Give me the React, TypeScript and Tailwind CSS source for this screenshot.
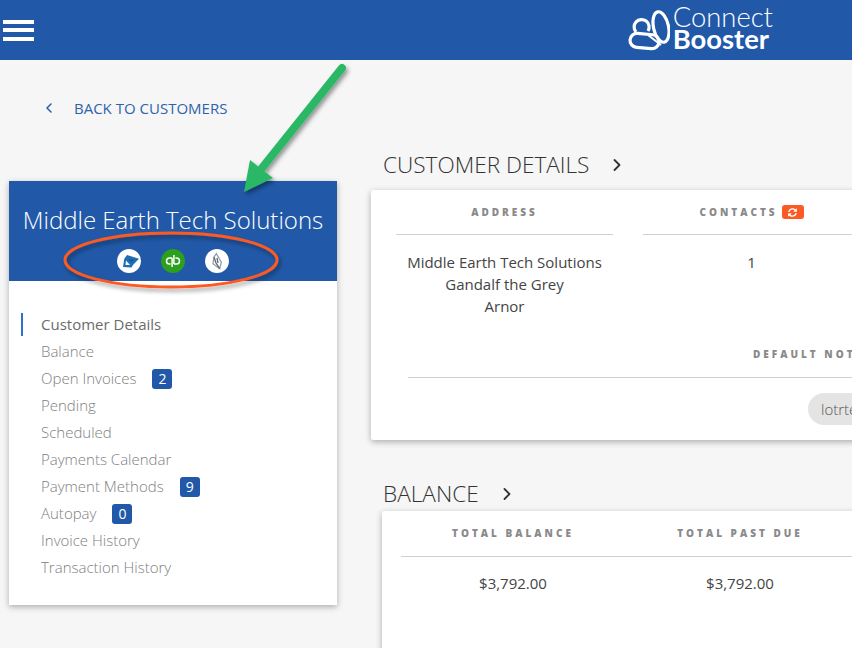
import { ChevronLeft, ChevronRight } from 'lucide-react';
import { FaSyncAlt } from 'react-icons/fa';

const navItems: { label: string; count?: number }[] = [
  { label: 'Balance' },
  { label: 'Open Invoices', count: 2 },
  { label: 'Pending' },
  { label: 'Scheduled' },
  { label: 'Payments Calendar' },
  { label: 'Payment Methods', count: 9 },
  { label: 'Autopay', count: 0 },
  { label: 'Invoice History' },
  { label: 'Transaction History' },
];

function Logo() {
  return (
    <div className="flex items-center gap-[3px]">
      <svg width="42" height="42" viewBox="0 0 42 42" fill="none" stroke="white" strokeWidth="3.2">
        <ellipse cx="33" cy="18" rx="7.5" ry="15.5" transform="rotate(-12 33 18)" />
        <path d="M20 22a7.5 7.5 0 1 0-12 1" />
        <rect x="2" y="25" width="29" height="14" rx="7" transform="rotate(5 16 32)" />
        <path d="M20 26 33 36" strokeWidth="2" />
      </svg>
      <div className="mb-[5px] flex flex-col font-['Lato',sans-serif] text-white">
        <span className="text-[27.4px] font-light leading-[21px]">Connect</span>
        <span className="text-[27.4px] font-bold leading-[23px]">Booster</span>
      </div>
    </div>
  );
}

function SmallTitle({ children }: { children: React.ReactNode }) {
  return <span className="text-[10px] font-extrabold leading-[14px] tracking-[3px] text-[#8a8a8a]">{children}</span>;
}

function SectionTitle({ title, mb }: { title: string; mb: string }) {
  return (
    <div className={`ml-[12px] flex h-[30px] items-center gap-[18px] text-[22.6px] font-light text-[#333] ${mb}`}>
      <span>{title}</span>
      <ChevronRight size={20} strokeWidth={2.2} className="text-[#333]" />
    </div>
  );
}

function IntegrationIcons() {
  return (
    <div className="mt-[13px] flex justify-center gap-[20px]">
      <div className="h-6 w-6 rounded-full bg-white">
        <svg width="24" height="24" viewBox="0 0 24 24" fill="#1f6fb5">
          <path d="M10 6 22 9.7 16 16 14.5 18.5 6 18 7.3 9.7z" />
          <path d="M9 11.5 13 16 8.5 16z" fill="white" />
          <path d="M11 10 18 10.5 14.5 13.5z" fill="#175a96" />
        </svg>
      </div>
      <div className="flex h-6 w-6 items-center justify-center rounded-full bg-[#2ca01c]">
        <svg width="16" height="12" viewBox="0 0 16 12" fill="none" stroke="white" strokeWidth="1.5">
          <path d="M7.1 2.9H4.6a3.1 3.1 0 0 0 0 6.2h1" />
          <path d="M7.1 2.9V12" />
          <path d="M8.9 9.1H11.4a3.1 3.1 0 0 0 0-6.2h-1" />
          <path d="M8.9 0V9.1" />
        </svg>
      </div>
      <div className="h-6 w-6 rounded-full bg-white">
        <svg width="24" height="24" viewBox="0 0 24 24" fill="none" strokeWidth="1.3">
          <path d="M11.3 4.7 16.3 13 14.7 19.7 8 14.7 9 8z" stroke="#8aa0b5" />
          <path d="M9 8 11 14 14.7 19.7M12 9 13 14" stroke="#666" />
        </svg>
      </div>
    </div>
  );
}

function Sidebar() {
  return (
    <div className="mt-[63px] w-[328px] bg-white shadow-[0_2px_6px_rgba(0,0,0,0.3)]">
      <div className="h-[100px] bg-[#2159a8] pt-[22px] text-center">
        <h1 className="text-[24px] font-light leading-[33px] text-white">Middle Earth Tech Solutions</h1>
        <IntegrationIcons />
      </div>
      <ul className="pb-6 pt-[30px] text-[15px] font-light leading-[27px] text-[#808080]">
        <li className="relative pl-8 font-normal text-[#6b6b6b]">
          <span className="absolute left-3 top-[2px] h-[23px] w-[2px] bg-[#2f6fd0]" />
          Customer Details
        </li>
        {navItems.map((item) => (
          <li key={item.label} className="flex h-[27px] items-center gap-4 pl-8">
            <span>{item.label}</span>
            {item.count !== undefined && (
              <span className="flex h-5 min-w-5 items-center justify-center rounded-[3px] bg-[#2159a8] px-1 text-[14px] font-normal text-white">
                {item.count}
              </span>
            )}
          </li>
        ))}
      </ul>
    </div>
  );
}

function CustomerDetailsCard() {
  return (
    <div className="h-[250px] w-[640px] rounded-[2px] bg-white shadow-[0_2px_6px_rgba(0,0,0,0.3)]">
      <div className="ml-[25px] grid grid-cols-[217px_217px] gap-[30px] pt-[15px] text-center">
        <div>
          <div className="flex h-[30px] items-start justify-center border-b border-[#d0d0d0]">
            <SmallTitle>ADDRESS</SmallTitle>
          </div>
          <p className="mt-[16px] text-[15px] leading-[22px] text-[#444]">
            Middle Earth Tech Solutions
            <br />
            Gandalf the Grey
            <br />
            Arnor
          </p>
        </div>
        <div>
          <div className="flex h-[30px] items-start justify-center gap-[4px] border-b border-[#d0d0d0]">
            <SmallTitle>CONTACTS</SmallTitle>
            <span className="flex h-[14px] w-[22px] items-center justify-center rounded-[3px] bg-[#fb5a24] text-white">
              <FaSyncAlt size={9} />
            </span>
          </div>
          <p className="mt-[16px] text-[15px] leading-[22px] text-[#444]">1</p>
        </div>
      </div>
      <div className="ml-[37px] mt-[23px] border-b border-[#d0d0d0] pb-[13px] pl-[345px]">
        <SmallTitle>DEFAULT NOTIFICATION EMAIL</SmallTitle>
      </div>
      <div className="ml-[437px] mt-[15px] flex h-8 w-[200px] items-center rounded-l-full bg-[#e4e4e4] pl-[13px] text-[15px] font-light text-[#555]">
        lotrtech@example.com
      </div>
    </div>
  );
}

function BalanceCard() {
  return (
    <div className="ml-[11px] h-[200px] w-[640px] rounded-[2px] bg-white px-[19px] pt-[15px] text-center shadow-[0_2px_6px_rgba(0,0,0,0.3)]">
      <div className="grid grid-cols-[224px_230px] border-b border-[#d0d0d0] pb-4">
        <SmallTitle>TOTAL BALANCE</SmallTitle>
        <SmallTitle>TOTAL PAST DUE</SmallTitle>
      </div>
      <div className="mt-[15px] grid grid-cols-[224px_230px] text-[15px] leading-[22px] text-[#444]">
        <span>$3,792.00</span>
        <span>$3,792.00</span>
      </div>
    </div>
  );
}

export default function App() {
  return (
    <div className="relative h-[648px] w-[852px] overflow-hidden bg-[#f6f6f6] font-['Open_Sans',sans-serif]">
      <header className="flex h-[60px] items-center justify-between bg-[#2159a8] pl-[3px] pr-[79px]">
        <div className="flex w-[31px] flex-col gap-[4.5px]">
          <span className="h-1 bg-white" />
          <span className="h-1 bg-white" />
          <span className="h-1 bg-white" />
        </div>
        <Logo />
      </header>

      <div className="flex">
        <div className="w-[371px] shrink-0 pl-[9px]">
          <a className="mt-[38px] flex h-5 items-center gap-[17px] pl-[32px] text-[15px] text-[#2f62ac]">
            <ChevronLeft size={16} strokeWidth={2.4} />
            <span>BACK TO CUSTOMERS</span>
          </a>
          <Sidebar />
        </div>

        <main className="pt-[90px]">
          <SectionTitle title="CUSTOMER DETAILS" mb="mb-[10px]" />
          <CustomerDetailsCard />
          <div className="mt-[39px]">
            <SectionTitle title="BALANCE" mb="mb-[2px]" />
          </div>
          <BalanceCard />
        </main>
      </div>

      {/* Annotation drawn on top of the screenshot */}
      <svg className="pointer-events-none absolute left-0 top-0" width="852" height="648" fill="none">
        <defs>
          <filter id="soft" x="-20%" y="-20%" width="140%" height="150%">
            <feDropShadow dx="2" dy="3" stdDeviation="2" floodColor="#000" floodOpacity="0.4" />
          </filter>
        </defs>
        <g filter="url(#soft)">
          <ellipse cx="171" cy="260" rx="106" ry="27" stroke="#fb5a24" strokeWidth="3" />
        </g>
        <g filter="url(#soft)">
          <path d="M342 68 262 168" stroke="#2cb866" strokeWidth="8" strokeLinecap="round" />
          <path d="M244 192 250 160 273 178z" fill="#2cb866" />
        </g>
      </svg>
    </div>
  );
}
